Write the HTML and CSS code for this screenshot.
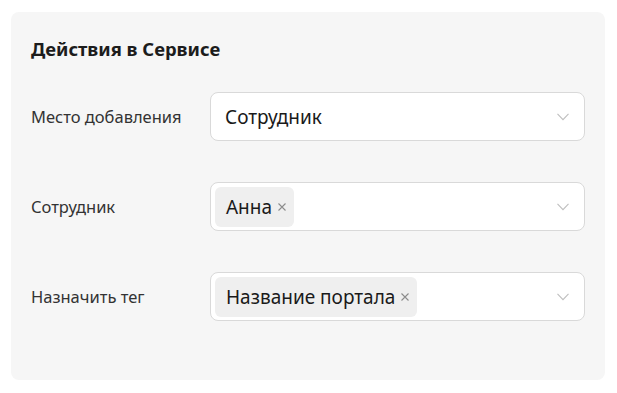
FILE: index.html
```html
<!DOCTYPE html>
<html lang="ru">
<head>
<meta charset="utf-8">
<link rel="stylesheet" href="styles.css">
</head>
<body>
<div class="card">
  <div class="title">Действия в Сервисе</div>
  <div class="rows">
    <div class="row">
      <div class="label">Место добавления</div>
      <div class="select">
        <div class="value">Сотрудник</div>
        <svg class="chev" width="12" height="8" viewBox="0 0 12 8"><path d="M0.5 0.8 L6 6.6 L11.5 0.8" fill="none" stroke="#bfbfbf" stroke-width="1.1"/></svg>
      </div>
    </div>
    <div class="row">
      <div class="label">Сотрудник</div>
      <div class="select multi">
        <div class="tag"><span class="tag-text">Анна</span><svg class="x" width="8" height="8" viewBox="0 0 8 8"><path d="M0.5 0.5 L7.5 7.5 M7.5 0.5 L0.5 7.5" stroke="#8c8c8c" stroke-width="1.1"/></svg></div>
        <svg class="chev" width="12" height="8" viewBox="0 0 12 8"><path d="M0.5 0.8 L6 6.6 L11.5 0.8" fill="none" stroke="#bfbfbf" stroke-width="1.1"/></svg>
      </div>
    </div>
    <div class="row">
      <div class="label">Назначить тег</div>
      <div class="select multi">
        <div class="tag"><span class="tag-text">Название портала</span><svg class="x" width="8" height="8" viewBox="0 0 8 8"><path d="M0.5 0.5 L7.5 7.5 M7.5 0.5 L0.5 7.5" stroke="#8c8c8c" stroke-width="1.1"/></svg></div>
        <svg class="chev" width="12" height="8" viewBox="0 0 12 8"><path d="M0.5 0.8 L6 6.6 L11.5 0.8" fill="none" stroke="#bfbfbf" stroke-width="1.1"/></svg>
      </div>
    </div>
  </div>
</div>
</body>
</html>
```
FILE: styles.css
```css
* { box-sizing: border-box; }
html, body { margin: 0; padding: 0; background: #ffffff; }
body {
  padding: 12px 12px 13px 11px;
  font-family: "Noto Sans", "Open Sans", sans-serif;
  color: #1f1f1f;
}
.card {
  width: 594px;
  height: 368px;
  background: #f6f6f6;
  border-radius: 8px;
  padding: 25px 20px 0 20px;
}
.title {
  font-size: 18.4px;
  font-weight: 700;
  line-height: 23px;
  color: #1c1c1c;
}
.rows {
  margin-top: 32px;
  display: flex;
  flex-direction: column;
  gap: 41px;
}
.row {
  display: flex;
  align-items: center;
}
.label {
  width: 179px;
  font-size: 16.5px;
  color: #333333;
}
.select {
  width: 375px;
  height: 49px;
  background: #ffffff;
  border: 1px solid #d9d9d9;
  border-radius: 8px;
  display: flex;
  align-items: center;
  justify-content: space-between;
  padding: 0 15px 0 14px;
}
.select.multi { padding-left: 4px; }
.value {
  font-size: 19px;
  color: #1a1a1a;
}
.tag {
  height: 40px;
  background: #efefef;
  border-radius: 6px;
  display: flex;
  align-items: center;
  gap: 6px;
  padding: 0 8px 0 11px;
}
.tag-text {
  font-size: 19px;
  color: #1a1a1a;
}
.chev { display: block; }
.x { display: block; }
```
